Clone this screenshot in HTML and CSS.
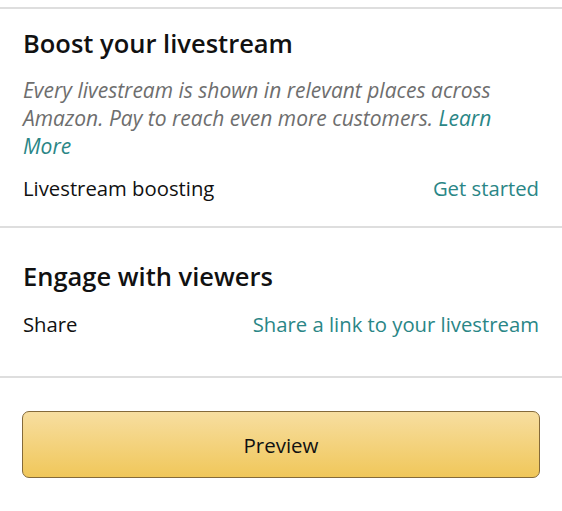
FILE: index.html
```html
<!DOCTYPE html>
<html>
<head>
<meta charset="utf-8">
<link rel="stylesheet" href="styles.css">
</head>
<body>
<div class="page">
  <hr class="divider top">
  <section class="section boost">
    <h2 class="title">Boost your livestream</h2>
    <p class="desc">Every livestream is shown in relevant places across Amazon. Pay to reach even more customers. <a class="link">Learn More</a></p>
    <div class="row">
      <span class="label">Livestream boosting</span>
      <a class="link">Get started</a>
    </div>
  </section>
  <hr class="divider">
  <section class="section engage">
    <h2 class="title">Engage with viewers</h2>
    <div class="row">
      <span class="label">Share</span>
      <a class="link">Share a link to your livestream</a>
    </div>
  </section>
  <hr class="divider">
  <div class="actions">
    <button class="btn">Preview</button>
  </div>
</div>
</body>
</html>
```

FILE: styles.css
```css
* { box-sizing: border-box; }
html, body {
  margin: 0;
  padding: 0;
  background: #fff;
}
body {
  font-family: "Open Sans", "Noto Sans", sans-serif;
  color: #111;
}
.page {
  width: 562px;
}
.divider {
  margin: 0;
  border: 0;
  border-top: 2px solid #dedede;
  height: 0;
}
.divider.top {
  margin-top: 7px;
}
.section {
  padding: 0 23px;
}
.boost {
  padding-top: 17px;
  padding-bottom: 24px;
}
.engage {
  padding-top: 31px;
  padding-bottom: 38px;
}
.title {
  margin: 0;
  font-size: 25.5px;
  line-height: 34px;
  font-weight: 600;
  color: #111;
}
.desc {
  margin: 16px 0 0;
  padding-right: 10px;
  font-size: 21px;
  line-height: 28px;
  font-style: italic;
  color: #6e6e6e;
}
.link {
  color: #2a8686;
  text-decoration: none;
}
.row {
  display: flex;
  justify-content: space-between;
  align-items: baseline;
  font-size: 20.3px;
  line-height: 28px;
}
.boost .row {
  margin-top: 14px;
}
.engage .row {
  margin-top: 17px;
}
.label {
  color: #111;
}
.actions {
  padding: 33px 22px 0;
}
.btn {
  display: block;
  width: 100%;
  height: 67px;
  border: 1.5px solid #846a3a;
  border-radius: 7px;
  background: linear-gradient(#f7dea0, #f0c75a);
  font-family: inherit;
  font-size: 20.5px;
  color: #111;
}
```
